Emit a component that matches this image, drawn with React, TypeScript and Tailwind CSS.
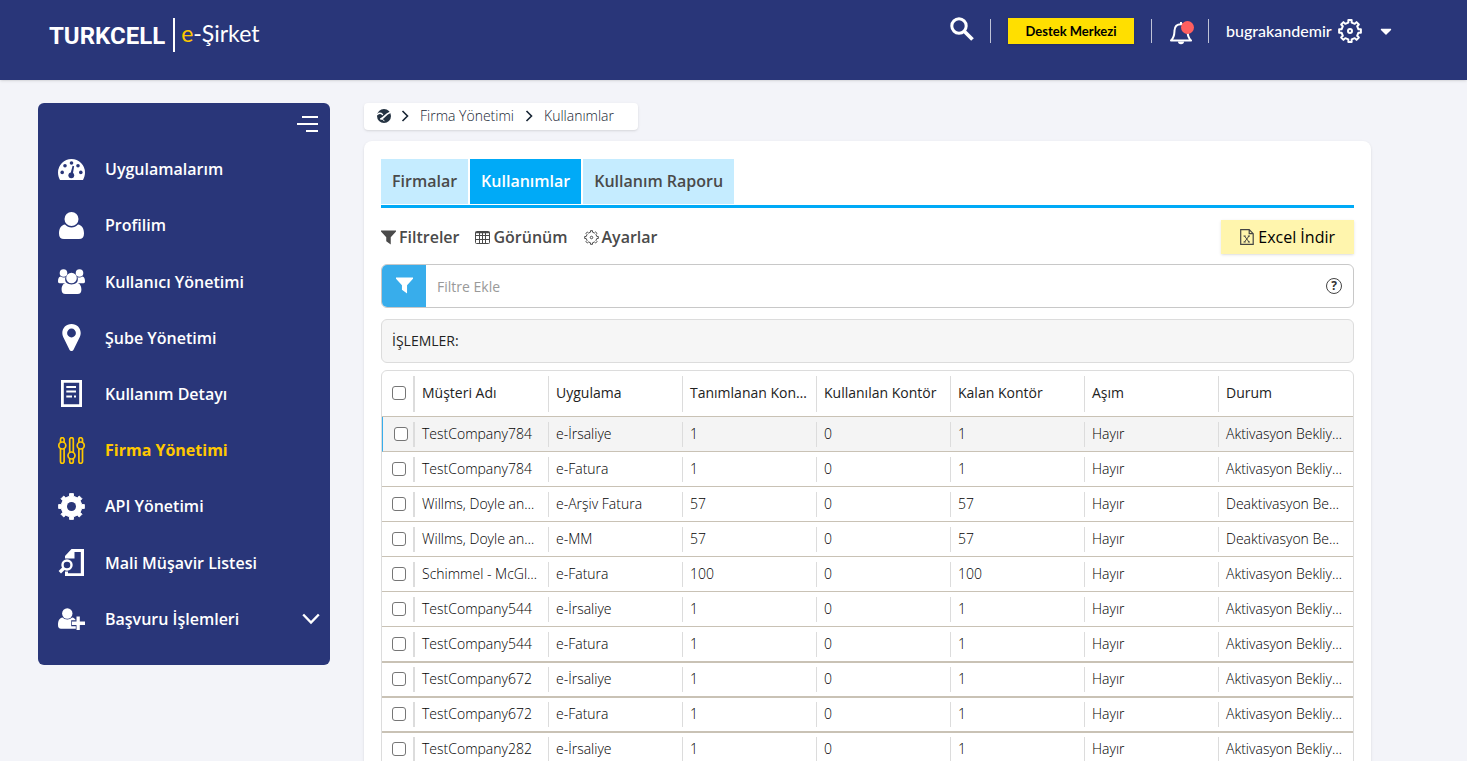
import type { ReactNode } from "react"
import clsx from "clsx"
import { FaCaretDown } from "react-icons/fa"

// outline of a cog centred on (12, 12)
function gearPath(outer: number, inner: number, teeth = 8) {
  const step = (Math.PI * 2) / teeth
  const points: string[] = []
  for (let i = 0; i < teeth; i++) {
    const mid = i * step - Math.PI / 2
    const corners = [
      [inner, mid - step * 0.25],
      [outer, mid - step * 0.19],
      [outer, mid + step * 0.19],
      [inner, mid + step * 0.25],
    ]
    corners.forEach(([r, a]) => {
      points.push(
        `${(12 + r * Math.cos(a)).toFixed(2)} ${(12 + r * Math.sin(a)).toFixed(2)}`
      )
    })
  }
  return `M${points.join("L")}Z`
}

function GearOutline({ className, stroke }: { className: string; stroke: number }) {
  return (
    <svg
      viewBox="0 0 24 24"
      className={className}
      fill="none"
      stroke="currentColor"
      strokeWidth={stroke}
      strokeLinejoin="round"
    >
      <path d={gearPath(11, 8.6)} />
      <circle cx="12" cy="12" r="2" />
    </svg>
  )
}

function FunnelIcon({ className }: { className: string }) {
  return (
    <svg viewBox="0 0 16 16" className={className} fill="currentColor">
      <path d="M0 .5h16v1.2l-5.6 6V15.500L5.600 12V7.700L0 1.700Z" />
    </svg>
  )
}

function SideIcon({ children }: { children: ReactNode }) {
  return (
    <svg viewBox="0 0 27 27" className="h-[27px] w-[27px] shrink-0" fill="currentColor">
      {children}
    </svg>
  )
}

const navItems: { label: string; icon: ReactNode; active?: boolean; open?: boolean }[] = [
  {
    label: "Uygulamalarım",
    icon: (
      <>
        <path d="M13.500 3A13.500 13.500 0 0 0 0 16.500c0 2.800.8 5.300 2 7.500h23c1.200-2.200 2-4.700 2-7.500A13.500 13.500 0 0 0 13.500 3Z" />
        <g fill="#293679">
          <circle cx="13.500" cy="7" r="1.800" />
          <circle cx="7" cy="9.800" r="1.800" />
          <circle cx="20" cy="9.800" r="1.800" />
          <circle cx="4.200" cy="16.400" r="1.800" />
          <circle cx="22.800" cy="16.400" r="1.800" />
          <circle cx="13.300" cy="19.300" r="2.900" />
          <path d="m12.400 18 2.200-8.200 1.500.4L14.800 18.500Z" />
        </g>
      </>
    ),
  },
  {
    label: "Profilim",
    icon: (
      <>
        <circle cx="13.500" cy="7" r="7" />
        <path d="M7 12.500c1.800 2 4 2.900 6.500 2.900s4.700-.9 6.500-2.900c3.800.6 6 4 6 9 0 3.700-1.700 5.500-5 5.500H6c-3.300 0-5-1.800-5-5.500 0-5 2.200-8.400 6-9Z" />
      </>
    ),
  },
  {
    label: "Kullanıcı Yönetimi",
    icon: (
      <>
        <circle cx="5.500" cy="5" r="3.800" />
        <circle cx="21.500" cy="5" r="3.800" />
        <path d="M2.500 8.500c2 1.400 3.800 1.300 5 .5-.8 2.500-.2 4.600 1.200 6.200H1.500C.5 15.200 0 14.500 0 13.200c0-2.500.8-4.500 2.500-4.700ZM24.500 8.500c-2 1.400-3.800 1.300-5 .5.800 2.500.2 4.600-1.200 6.200h7.200c1 0 1.500-.7 1.500-2 0-2.500-.8-4.500-2.500-4.700Z" />
        <circle cx="13.500" cy="10" r="5.300" />
        <path d="M8.500 14.800c1.500 1.200 3 1.700 5 1.700s3.500-.5 5-1.700c3.300.4 4.900 3 4.900 7 0 2.800-1.300 4.200-3.900 4.200h-12c-2.600 0-3.900-1.400-3.900-4.200 0-4 1.600-6.600 4.900-7Z" />
      </>
    ),
  },
  {
    label: "Şube Yönetimi",
    icon: (
      <path
        fillRule="evenodd"
        d="M13.500 0C8.200 0 4.300 3.900 4.300 9c0 1.500.3 2.700.9 3.900l6.400 13c.8 1.500 3 1.500 3.800 0l6.400-13c.6-1.200.9-2.400.9-3.900 0-5.100-3.900-9-9.200-9Zm0 4.600a4.400 4.400 0 1 1 0 8.800 4.400 4.400 0 0 1 0-8.800Z"
      />
    ),
  },
  {
    label: "Kullanım Detayı",
    icon: (
      <>
        <path fillRule="evenodd" d="M3 0h21v27H3Zm2.800 2.700v21.600h15.400V2.700Z" />
        <path d="M8.300 6H18v2H8.300ZM8.300 10.500H18v2H8.300ZM8.300 15.500H14v2H8.300ZM16 15.500h2v2h-2Z" />
      </>
    ),
  },
  {
    label: "Firma Yönetimi",
    active: true,
    icon: (
      <g fill="none" stroke="currentColor" strokeWidth="1.700">
        <circle cx="4.300" cy="8.500" r="3.500" />
        <circle cx="13.500" cy="18.500" r="3.500" />
        <circle cx="22.700" cy="8.500" r="3.500" />
        <path d="M2.500 5.500V2.500a1.800 1.800 0 0 1 3.600 0v3M2.500 11.600v12.900a1.800 1.800 0 0 0 3.600 0V11.600M20.900 5.500V2.500a1.800 1.800 0 0 1 3.600 0v3M20.900 11.600v12.900a1.800 1.800 0 0 0 3.600 0V11.600M11.700 15.500v-13a1.800 1.800 0 0 1 3.600 0v13M11.700 21.500v3a1.800 1.800 0 0 0 3.600 0v-3" />
      </g>
    ),
  },
  {
    label: "API Yönetimi",
    icon: (
      <>
        <g transform="scale(1.125)">
          <path d={gearPath(11.6, 9.3)} stroke="currentColor" strokeWidth=".8" strokeLinejoin="round" />
        </g>
        <circle cx="13.500" cy="13.500" r="4.500" fill="#293679" />
      </>
    ),
  },
  {
    label: "Mali Müşavir Listesi",
    icon: (
      <>
        <path d="M13.500 0H26v27H7v-4.500h3v1.700h12.800V3H16.500v6.500H7V7Z" />
        <circle cx="9" cy="16" r="4.500" fill="none" stroke="currentColor" strokeWidth="2.400" />
        <path d="m5.800 19.200-4 4" stroke="currentColor" strokeWidth="3.400" />
      </>
    ),
  },
  {
    label: "Başvuru İşlemleri",
    open: true,
    icon: (
      <>
        <circle cx="9.300" cy="8.500" r="5.200" />
        <path d="M4.500 12.600c1.300 1.300 3 1.900 4.800 1.900s3.500-.6 4.800-1.900c1.800.3 3 1.200 3.700 2.600h-4.600v6h4.600v2.600H3c-2 0-3-1.300-3-3.800 0-4.200 1.500-7 4.500-7.400Z" />
        <path d="M18.500 11.500h3.300v5H27v3.400h-5.200V25h-3.300v-5.100h-4.600v-3.400h4.600Z" />
      </>
    ),
  },
]

const columns = [
  "Müşteri Adı",
  "Uygulama",
  "Tanımlanan Kontör",
  "Kullanılan Kontör",
  "Kalan Kontör",
  "Aşım",
  "Durum",
]

const rows = [
  ["TestCompany784", "e-İrsaliye", "1", "0", "1", "Hayır", "Aktivasyon Bekliyor"],
  ["TestCompany784", "e-Fatura", "1", "0", "1", "Hayır", "Aktivasyon Bekliyor"],
  ["Willms, Doyle and Sons", "e-Arşiv Fatura", "57", "0", "57", "Hayır", "Deaktivasyon Bekliyor"],
  ["Willms, Doyle and Sons", "e-MM", "57", "0", "57", "Hayır", "Deaktivasyon Bekliyor"],
  ["Schimmel - McGlynn", "e-Fatura", "100", "0", "100", "Hayır", "Aktivasyon Bekliyor"],
  ["TestCompany544", "e-İrsaliye", "1", "0", "1", "Hayır", "Aktivasyon Bekliyor"],
  ["TestCompany544", "e-Fatura", "1", "0", "1", "Hayır", "Aktivasyon Bekliyor"],
  ["TestCompany672", "e-İrsaliye", "1", "0", "1", "Hayır", "Aktivasyon Bekliyor"],
  ["TestCompany672", "e-Fatura", "1", "0", "1", "Hayır", "Aktivasyon Bekliyor"],
  ["TestCompany282", "e-İrsaliye", "1", "0", "1", "Hayır", "Aktivasyon Bekliyor"],
]

function Header() {
  return (
    <header className="flex h-20 shrink-0 items-start justify-between bg-[#293679] pr-[75px] pl-[49px] text-white shadow">
      <a href="#" className="flex h-[70px] items-center">
        <span className="pt-0.5 font-[Roboto,sans-serif] text-2xl font-bold">TURKCELL</span>
        <span className="mr-1.5 ml-2 h-[34px] w-0.5 bg-white" />
        <span className="pb-1 font-[Lato,sans-serif] text-[23px]">
          <span className="text-[#ffc800]">e</span>-Şirket
        </span>
      </a>
      <div className="flex h-[62px] items-center font-[Lato,sans-serif]">
        <button aria-label="Ara" className="pb-1">
          <svg viewBox="0 0 24 24" className="h-6 w-6" fill="none" stroke="currentColor">
            <circle cx="9" cy="9" r="7.200" strokeWidth="3" />
            <path d="m14.500 14.500 8 8" strokeWidth="3.800" />
          </svg>
        </button>
        <span className="ml-4 h-6 w-px bg-white/70" />
        <button className="ml-[17px] h-[26px] w-[126px] bg-[#ffdf00] pt-0.5 text-[13px] font-bold text-black shadow">
          Destek Merkezi
        </button>
        <span className="ml-[17px] h-6 w-px bg-white/70" />
        <button aria-label="Bildirimler" className="relative ml-[18px] pt-1">
          <svg viewBox="0 0 22 24" className="h-6 w-[22px]" fill="none" stroke="currentColor" strokeWidth="2" strokeLinejoin="round">
            <path d="M1 19.500c3.500-3 3.300-6 3.500-10C4.700 5.500 7 3.200 11 3.200s6.300 2.300 6.500 6.300c.2 4 0 7 3.500 10Z" />
            <path d="M11 3V1" />
            <path d="M8 20.500a3 2.800 0 0 0 6 0Z" fill="currentColor" stroke="none" />
          </svg>
          <span className="absolute top-1 left-[11px] h-[13px] w-[13px] rounded-full bg-[#ff5f5f]" />
        </button>
        <span className="ml-4 h-6 w-px bg-white/70" />
        <button className="ml-[17px] flex items-center">
          <span className="w-28 text-left text-base font-medium">bugrakandemir</span>
          <GearOutline className="h-6 w-6" stroke={2} />
          <FaCaretDown className="ml-[18px] h-[18px] w-[12px]" />
        </button>
      </div>
    </header>
  )
}

function Sidebar() {
  return (
    <aside className="w-[292px] shrink-0 rounded-md bg-[#293679] pb-[18px] text-white">
      <div className="flex h-[38px] items-end justify-end pr-3">
        <button aria-label="Menü" className="mb-2">
          <svg viewBox="0 0 21 18" className="h-[18px] w-[21px]" fill="currentColor">
            <path d="M5 1h16v2H5ZM0 8h21v2H0ZM9 15h12v2H9Z" />
          </svg>
        </button>
      </div>
      <nav>
        <ul className="flex h-[506px] flex-col">
          {navItems.map((item) => (
            <li key={item.label} className="flex flex-1">
              <a
                href="#"
                className={clsx(
                  "flex flex-1 items-center gap-5 pr-2.5 pl-5 text-base",
                  item.active ? "font-bold text-[#ffc800]" : "font-semibold"
                )}
              >
                <SideIcon>{item.icon}</SideIcon>
                <span className="flex-1">{item.label}</span>
                {item.open && (
                  <svg viewBox="0 0 18 12" className="h-3 w-[18px]" fill="none" stroke="currentColor" strokeWidth="2.400">
                    <path d="m1.200 1.500 7.800 8 7.800-8" />
                  </svg>
                )}
              </a>
            </li>
          ))}
        </ul>
      </nav>
    </aside>
  )
}

function Chevron() {
  return (
    <svg viewBox="0 0 8 12" className="h-3 w-2" fill="none" stroke="currentColor" strokeWidth="1.600">
      <path d="m1.500 1 5 5-5 5" />
    </svg>
  )
}

function Breadcrumb() {
  return (
    <nav className="flex h-[27px] w-max items-center rounded bg-white pr-6 pb-0.5 pl-[13px] text-sm font-light text-[#162433] shadow-sm">
      <a href="#" aria-label="Ana Sayfa">
        <svg viewBox="0 0 14 14" className="h-3.5 w-3.5">
          <circle cx="7" cy="7" r="7" fill="#253342" />
          <g fill="none" stroke="#fff" strokeLinecap="round">
            <path d="M.3 5.500C2 4 4 4 5.500 5.500" strokeWidth="1.300" />
            <path d="M4 9.800C7.500 9 8 5.200 13 3.500" strokeWidth="1.800" />
            <path d="M4 9.800c1.500 0 2.500.8 3 2" strokeWidth="1" />
          </g>
        </svg>
      </a>
      <span className="mr-[11px] ml-2.5">
        <Chevron />
      </span>
      <a href="#">Firma Yönetimi</a>
      <span className="mx-[11px]">
        <Chevron />
      </span>
      <a href="#">Kullanımlar</a>
    </nav>
  )
}

function Tabs() {
  return (
    <div className="flex gap-0.5 border-b-3 border-[#00aaf7] pb-px text-base font-semibold text-[#4a4a4a]">
      <button className="h-[45px] bg-[#c5ecff] px-[11px] pb-0.5">Firmalar</button>
      <button className="h-[45px] bg-[#00aaf7] px-[11px] pb-0.5 text-white">Kullanımlar</button>
      <button className="h-[45px] bg-[#c5ecff] px-[11px] pb-0.5">Kullanım Raporu</button>
    </div>
  )
}

function Toolbar() {
  return (
    <div className="mt-3 flex items-center justify-between text-base font-semibold text-[#4a4a4a]">
      <div className="flex gap-4">
        <button className="flex items-center gap-[3px]">
          <FunnelIcon className="h-[15px] w-[15px]" />
          Filtreler
        </button>
        <button className="flex items-center gap-[3px]">
          <svg viewBox="0 0 15 13" className="h-[13px] w-[15px]" fill="none" stroke="currentColor">
            <rect x=".5" y=".5" width="14" height="12" rx="1" />
            <path d="M.5 1.500h14" strokeWidth="1.500" />
            <path d="M.5 4.500h14M.5 8.500h14M4.500 1v11.500M7.500 1v11.500M10.500 1v11.500" />
          </svg>
          Görünüm
        </button>
        <button className="flex items-center gap-[3px]">
          <GearOutline className="h-[15px] w-[15px]" stroke={1.6} />
          Ayarlar
        </button>
      </div>
      <button className="flex h-[34px] items-center gap-1 bg-[#fff5ad] px-[19px] font-medium text-black shadow">
        <svg viewBox="0 0 14 16" className="h-4 w-3.5" fill="none" stroke="#444">
          <path d="M.7.7h8.500l4 4v10.600H.7ZM9.200.7v4h4" strokeWidth="1.200" />
          <path d="m4.500 7 4.500 6M9 7l-4.500 6M3.500 7h2.200M7.800 7H10M3.500 13h2.200M7.800 13H10" />
        </svg>
        Excel İndir
      </button>
    </div>
  )
}

function FilterBar() {
  return (
    <div className="mt-2.5 flex h-11 items-center overflow-hidden rounded-md border border-[#c8c8c8]">
      <button aria-label="Filtrele" className="flex h-full w-11 items-center justify-center bg-[#38adeb] pb-0.5 text-white">
        <FunnelIcon className="h-[17px] w-[17px]" />
      </button>
      <input
        aria-label="Filtre Ekle"
        placeholder="Filtre Ekle"
        className="h-full flex-1 px-[11px] text-sm outline-none placeholder:text-[#999]"
      />
      <button
        aria-label="Yardım"
        className="mr-[11px] flex h-4 w-4 items-center justify-center rounded-full border border-[#444] text-xs font-bold text-[#333]"
      >
        ?
      </button>
    </div>
  )
}

function Checkbox({ label }: { label: string }) {
  return (
    <input
      type="checkbox"
      aria-label={label}
      className="h-3.5 w-3.5 appearance-none rounded-[3px] border border-[#767676] bg-white checked:bg-[#38adeb]"
    />
  )
}

function UsageTable() {
  return (
    <div className="mt-[7px] overflow-hidden rounded-t-md border border-[#dcdcdc]">
      <table className="w-full table-fixed border-separate border-spacing-0 text-left text-sm text-[#222]">
        <thead>
          <tr>
            <th className="w-[33px] border-b border-[#c9c2b5] pt-[5px] pb-1">
              <div className="flex h-9 items-center border-r-2 border-[#dcdcdc] pb-0.5 pl-2.5">
                <Checkbox label="Tümünü seç" />
              </div>
            </th>
            {columns.map((column) => (
              <th key={column} className="group border-b border-[#c9c2b5] pt-[5px] pb-1 font-medium">
                <div className="h-9 truncate border-r border-[#dcdcdc] px-[7px] leading-[34px] group-last:border-0">
                  {column}
                </div>
              </th>
            ))}
          </tr>
        </thead>
        <tbody className="font-light text-black">
          {rows.map((row, i) => {
            const cell = clsx(
              "group border-[#c9c2b5] pb-1",
              i >= 6 ? "border-b-2" : "border-b",
              i >= 7 ? "pt-1" : "pt-[5px]"
            )
            return (
              <tr key={i} className={clsx(i === 0 && "bg-[#f4f4f4]")}>
                <td className={clsx(cell, i === 0 && "border-l border-l-[#38adeb]")}>
                  <div
                    className={clsx(
                      "flex h-[25px] items-center border-r-2 border-[#dcdcdc] pb-0.5",
                      i === 0 ? "pl-[11px]" : "pl-2.5"
                    )}
                  >
                    <Checkbox label={`${row[0]} ${row[1]}`} />
                  </div>
                </td>
                {row.map((value, j) => (
                  <td key={j} className={cell}>
                    <div className="h-[25px] truncate border-r border-[#dcdcdc] pr-2 pl-[7px] leading-6 group-last:border-0">
                      {value}
                    </div>
                  </td>
                ))}
              </tr>
            )
          })}
        </tbody>
      </table>
    </div>
  )
}

export default function App() {
  return (
    <div className="flex h-screen flex-col overflow-hidden bg-[#f3f4f9] font-['Open_Sans',sans-serif]">
      <Header />
      <div className="flex items-start gap-[34px] pt-[23px] pr-24 pl-[38px]">
        <Sidebar />
        <main className="min-w-0 flex-1">
          <Breadcrumb />
          <section className="mt-[11px] rounded-lg bg-white px-[17px] pt-[18px] pb-6 shadow-sm">
            <Tabs />
            <Toolbar />
            <FilterBar />
            <div className="mt-[11px] flex h-11 items-center rounded-md border border-[#dcdcdc] bg-[#f6f6f6] px-2.5 text-sm font-medium text-[#222]">
              İŞLEMLER:
            </div>
            <UsageTable />
          </section>
        </main>
      </div>
    </div>
  )
}
